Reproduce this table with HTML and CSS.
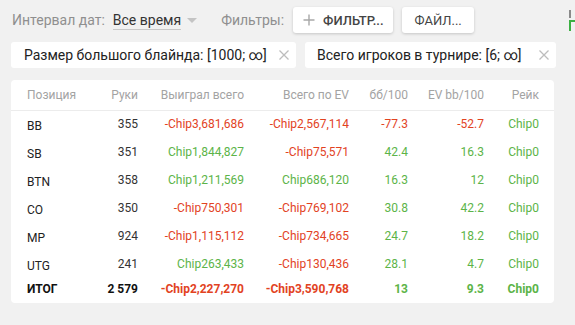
FILE: index.html
```html
<!DOCTYPE html>
<html lang="ru">
<head>
<meta charset="utf-8">
<title>Позиции</title>
<link rel="stylesheet" href="styles.css">
</head>
<body>
<div class="page">
  <div class="toolbar">
    <span class="label">Интервал дат:</span>
    <span class="select"><span class="select-value">Все время</span><span class="caret"></span></span>
    <span class="label filters-label">Фильтры:</span>
    <button class="btn btn-add"><svg class="plus" width="12" height="12" viewBox="0 0 12 12"><path d="M6 0.5V11.5M0.5 6H11.5" stroke="#a8a8a8" stroke-width="1.4"/></svg>ФИЛЬТР...</button>
    <button class="btn btn-file">ФАЙЛ...</button>
  </div>
  <svg class="corner-icon" width="8" height="24" viewBox="0 0 8 24"><rect x="0" y="0" width="2" height="8" fill="#8a8a8a"/><rect x="0" y="10" width="2" height="11" fill="#3cb043"/><rect x="0" y="10" width="8" height="2" fill="#3cb043"/></svg>
  <div class="chips">
    <div class="chip"><span class="chip-text">Размер большого блайнда: [1000; ∞]</span><svg class="chip-x" width="10" height="10" viewBox="0 0 10 10"><path d="M0.5 0.5L9.5 9.5M9.5 0.5L0.5 9.5" stroke="#bdbdbd" stroke-width="1.3"/></svg></div>
    <div class="chip"><span class="chip-text">Всего игроков в турнире: [6; ∞]</span><svg class="chip-x" width="10" height="10" viewBox="0 0 10 10"><path d="M0.5 0.5L9.5 9.5M9.5 0.5L0.5 9.5" stroke="#bdbdbd" stroke-width="1.3"/></svg></div>
  </div>
  <div class="card">
    <table class="stats">
      <colgroup>
        <col class="c1"><col class="c2"><col class="c3"><col class="c4"><col class="c5"><col class="c6"><col class="c7">
      </colgroup>
      <thead>
        <tr><th class="pos">Позиция</th><th>Руки</th><th>Выиграл всего</th><th>Всего по EV</th><th>бб/100</th><th>EV bb/100</th><th>Рейк</th></tr>
      </thead>
      <tbody>
        <tr><td class="pos">BB</td><td>355</td><td class="neg">-Chip3,681,686</td><td class="neg">-Chip2,567,114</td><td class="neg">-77.3</td><td class="neg">-52.7</td><td class="pos-val">Chip0</td></tr>
        <tr><td class="pos">SB</td><td>351</td><td class="pos-val">Chip1,844,827</td><td class="neg">-Chip75,571</td><td class="pos-val">42.4</td><td class="pos-val">16.3</td><td class="pos-val">Chip0</td></tr>
        <tr><td class="pos">BTN</td><td>358</td><td class="pos-val">Chip1,211,569</td><td class="pos-val">Chip686,120</td><td class="pos-val">16.3</td><td class="pos-val">12</td><td class="pos-val">Chip0</td></tr>
        <tr><td class="pos">CO</td><td>350</td><td class="neg">-Chip750,301</td><td class="neg">-Chip769,102</td><td class="pos-val">30.8</td><td class="pos-val">42.2</td><td class="pos-val">Chip0</td></tr>
        <tr><td class="pos">MP</td><td>924</td><td class="neg">-Chip1,115,112</td><td class="neg">-Chip734,665</td><td class="pos-val">24.7</td><td class="pos-val">18.2</td><td class="pos-val">Chip0</td></tr>
        <tr><td class="pos">UTG</td><td>241</td><td class="pos-val">Chip263,433</td><td class="neg">-Chip130,436</td><td class="pos-val">28.1</td><td class="pos-val">4.7</td><td class="pos-val">Chip0</td></tr>
        <tr class="total"><td class="pos">ИТОГ</td><td>2 579</td><td class="neg">-Chip2,227,270</td><td class="neg">-Chip3,590,768</td><td class="pos-val">13</td><td class="pos-val">9.3</td><td class="pos-val">Chip0</td></tr>
      </tbody>
    </table>
  </div>
</div>
</body>
</html>
```
FILE: styles.css
```css
html, body {
  margin: 0;
  padding: 0;
  background: #f1f1f1;
}
body {
  font-family: Roboto, "Liberation Sans", Arial, sans-serif;
  font-size: 13px;
  color: #333;
}
.page {
  position: relative;
  padding: 7px 0 0 11px;
  width: 564px;
  height: 318px;
  overflow: hidden;
}
.toolbar {
  display: flex;
  align-items: center;
  height: 26px;
}
.label {
  color: #8f8f8f;
  font-size: 14px;
  margin-left: 1px;
}
.select {
  display: inline-flex;
  align-items: center;
  margin-left: 8px;
}
.select-value {
  font-size: 14px;
  color: #333;
  border-bottom: 1px solid #c8c8c8;
  padding-bottom: 1px;
  margin-top: 2px;
}
.caret {
  width: 0;
  height: 0;
  border-left: 5px solid transparent;
  border-right: 5px solid transparent;
  border-top: 5px solid #c4c4c4;
  margin-left: 6px;
}
.filters-label {
  margin-left: 24px;
}
.btn {
  height: 26px;
  background: #fff;
  border: none;
  border-radius: 3px;
  box-shadow: 0 1px 3px rgba(0,0,0,0.18);
  font-family: Roboto, "Liberation Sans", Arial, sans-serif;
  font-size: 13px;
  font-weight: 500;
  color: #444;
  display: inline-flex;
  align-items: center;
  padding: 0;
}
.btn-add {
  margin-left: 9px;
  width: 100px;
  padding-left: 10px;
}
.plus {
  margin-right: 8px;
}
.btn-file {
  margin-left: 9px;
  width: 72px;
  justify-content: center;
  font-weight: 400;
}
.corner-icon {
  position: absolute;
  left: 569px;
  top: 10px;
}
.chips {
  display: flex;
  gap: 9px;
  margin-top: 9px;
}
.chip {
  height: 26px;
  background: #fff;
  border-radius: 3px;
  display: flex;
  align-items: center;
  padding: 0 7px 0 13px;
  font-size: 14px;
  color: #222;
}
.chip:first-child {
  width: 265px;
}
.chip:last-child {
  width: 232px;
  padding-left: 12px;
}
.chip-text {
  flex: 1;
}
.chip-x {
  flex: none;
}
.card {
  margin-top: 12px;
  width: 543px;
  background: #fff;
  border-radius: 4px;
}
.stats {
  width: 543px;
  border-collapse: collapse;
  table-layout: fixed;
  font-size: 12px;
}
.c1 { width: 69px; }
.c2 { width: 58px; }
.c3 { width: 106px; }
.c4 { width: 105px; }
.c5 { width: 59px; }
.c6 { width: 76px; }
.c7 { width: 70px; }
.stats th, .stats td {
  text-align: right;
  padding: 0;
  white-space: nowrap;
  line-height: 14px;
}
.stats th:last-child, .stats td:last-child {
  padding-right: 15px;
}
.stats thead tr {
  height: 30px;
}
.stats th {
  font-weight: 400;
  color: #a3a3a3;
  border-bottom: 1px solid #ececec;
}
.stats tbody tr {
  height: 28px;
}
.stats .pos {
  text-align: left;
  padding-left: 16px;
}
.stats td.pos {
  padding-top: 3px;
  color: #222;
}
.neg { color: #e2431f; }
.pos-val { color: #5cb448; }
.stats tbody tr.total {
  height: 25px;
}
.total td {
  font-weight: 700;
  padding-bottom: 4px;
  color: #111;
}
.total td.pos { padding-top: 0; color: #111; }
.total td.neg { color: #e2431f; }
.total td.pos-val { color: #5cb448; }
```
